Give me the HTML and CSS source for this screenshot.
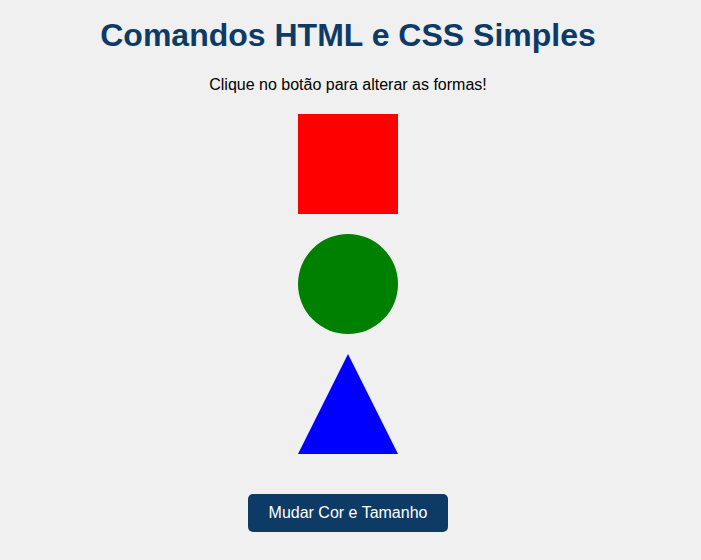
FILE: index.html
```html
<!DOCTYPE html>
<html lang="pt">
<head>
<meta charset="utf-8">
<title>Comandos HTML e CSS Simples</title>
<link rel="stylesheet" href="styles.css">
</head>
<body>
<main class="page">
  <h1 class="title">Comandos HTML e CSS Simples</h1>
  <p class="subtitle">Clique no botão para alterar as formas!</p>
  <div class="shapes">
    <div class="square"></div>
    <div class="circle"></div>
    <div class="triangle"></div>
  </div>
  <button class="btn" type="button">Mudar Cor e Tamanho</button>
</main>
</body>
</html>
```
FILE: styles.css
```css
html, body {
  margin: 0;
  padding: 0;
  background: #f0f0f0;
}
body {
  font-family: "Liberation Sans", Arial, sans-serif;
  color: #000;
}
.page {
  width: 696px;
  display: flex;
  flex-direction: column;
  align-items: center;
  padding-top: 17px;
}
.title {
  margin: 0 0 21px;
  font-size: 32px;
  font-weight: bold;
  color: #0d3b66;
  line-height: 37px;
}
.subtitle {
  margin: 0;
  font-size: 16px;
  line-height: 19px;
}
.shapes {
  margin-top: 20px;
  display: flex;
  flex-direction: column;
  align-items: center;
  gap: 20px;
}
.square {
  width: 100px;
  height: 100px;
  background: #ff0000;
}
.circle {
  width: 100px;
  height: 100px;
  border-radius: 50%;
  background: #008000;
}
.triangle {
  width: 0;
  height: 0;
  border-left: 50px solid transparent;
  border-right: 50px solid transparent;
  border-bottom: 100px solid #0000ff;
}
.btn {
  margin-top: 40px;
  padding: 10px 20.5px;
  font-family: "Liberation Sans", Arial, sans-serif;
  font-size: 16px;
  line-height: 18px;
  color: #fff;
  background: #0d3b66;
  border: none;
  border-radius: 5px;
  cursor: pointer;
}
```
